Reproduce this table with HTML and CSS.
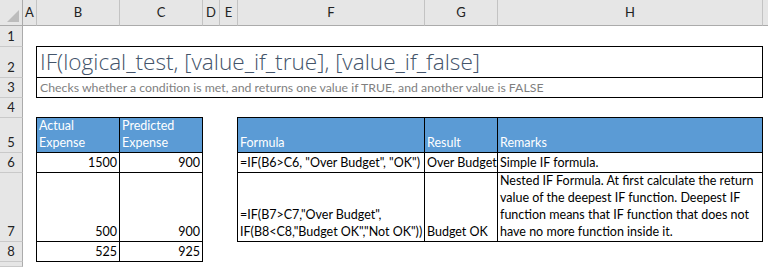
FILE: index.html
```html
<!DOCTYPE html>
<html lang="en">
<head>
<meta charset="utf-8">
<title>IF function</title>
<link rel="stylesheet" href="styles.css">
</head>
<body>
<div class="sheet">
  <!-- column headers -->
  <div class="row">
    <div class="corner"><div class="tri"></div></div>
    <div class="ch">A</div>
    <div class="ch">B</div>
    <div class="ch">C</div>
    <div class="ch">D</div>
    <div class="ch">E</div>
    <div class="ch">F</div>
    <div class="ch">G</div>
    <div class="ch">H</div>
    <div class="ch ch-rest"></div>
  </div>
  <!-- row 1 -->
  <div class="row">
    <div class="rh">1</div>
    <div class="fill"></div>
  </div>
  <!-- row 2 -->
  <div class="row">
    <div class="rh">2</div>
    <div></div>
    <div class="box title">IF(logical_test, [value_if_true], [value_if_false]</div>
    <div></div>
  </div>
  <!-- row 3 -->
  <div class="row">
    <div class="rh">3</div>
    <div></div>
    <div class="box subtitle">Checks whether a condition is met, and returns one value if TRUE, and another value is FALSE</div>
    <div></div>
  </div>
  <!-- row 4 -->
  <div class="row">
    <div class="rh">4</div>
    <div class="fill"></div>
  </div>
  <!-- row 5 -->
  <div class="row">
    <div class="rh">5</div>
    <div></div>
    <div class="c t head">Actual<br>Expense</div>
    <div class="c t head">Predicted<br>Expense</div>
    <div></div>
    <div></div>
    <div class="c t head">Formula</div>
    <div class="c t head">Result</div>
    <div class="c t head">Remarks</div>
    <div></div>
  </div>
  <!-- row 6 -->
  <div class="row">
    <div class="rh">6</div>
    <div></div>
    <div class="c t num">1500</div>
    <div class="c t num">900</div>
    <div></div>
    <div></div>
    <div class="c t">=IF(B6&gt;C6, "Over Budget", "OK")</div>
    <div class="c t">Over Budget</div>
    <div class="c t">Simple IF formula.</div>
    <div></div>
  </div>
  <!-- row 7 -->
  <div class="row">
    <div class="rh">7</div>
    <div></div>
    <div class="c t num">500</div>
    <div class="c t num">900</div>
    <div></div>
    <div></div>
    <div class="c t">=IF(B7&gt;C7,"Over Budget",<br>IF(B8&lt;C8,"Budget OK","Not OK"))</div>
    <div class="c t">Budget OK</div>
    <div class="c t">Nested IF Formula. At first calculate the return<br>value of the deepest IF function. Deepest IF<br>function means that IF function that does not<br>have no more function inside it.</div>
    <div></div>
  </div>
  <!-- row 8 -->
  <div class="row">
    <div class="rh">8</div>
    <div></div>
    <div class="c t num">525</div>
    <div class="c t num">925</div>
    <div class="fill-right"></div>
  </div>
  <!-- row 9 -->
  <div class="row">
    <div class="rh"></div>
    <div class="fill"></div>
  </div>
</div>
</body>
</html>
```
FILE: styles.css
```css
* { box-sizing: border-box; }

html, body {
  margin: 0;
  padding: 0;
  background: #ffffff;
}

body {
  width: 768px;
  height: 267px;
  overflow: hidden;
  font-family: "Lato", "Liberation Sans", sans-serif;
  font-size: 12.5px;
  color: #000;
}

.sheet {
  display: grid;
  grid-template-columns: 23px 14px 83px 83px 17px 18px 187px 73px 265px 1fr;
  grid-template-rows: 26px 21px 31px 20px 20px 35px 20px 69px 20px 1fr;
  width: 768px;
  height: 267px;
}

.row { display: contents; }

/* headers */
.corner {
  background: #e6e6e6;
  border-right: 1px solid #ababab;
  border-bottom: 1px solid #ababab;
  display: flex;
  justify-content: flex-end;
  align-items: flex-end;
  padding: 0 3px 3px 0;
}
.tri {
  width: 12px;
  height: 12px;
  background: #bcbcbc;
  clip-path: polygon(100% 0, 100% 100%, 0 100%);
}

.ch {
  background: #e6e6e6;
  border-right: 1px solid #c3c3c3;
  border-bottom: 1px solid #ababab;
  display: flex;
  justify-content: center;
  align-items: flex-end;
  padding-bottom: 4px;
  line-height: 17px;
  font-size: 13px;
  color: #222;
}
.ch-rest { border-right: none; }

.rh {
  grid-column: 1;
  background: #e6e6e6;
  border-right: 1px solid #ababab;
  border-bottom: 1px solid #c9c9c9;
  display: flex;
  justify-content: center;
  align-items: flex-end;
  padding-bottom: 1px;
  line-height: 17px;
  font-size: 13px;
  color: #222;
}

.fill { grid-column: 2 / -1; }
.fill-right { grid-column: 5 / -1; }

/* bordered boxes */
.box,
.t {
  border-right: 1px solid #000;
  border-bottom: 1px solid #000;
  box-shadow: -1px 0 0 #000, 0 -1px 0 #000, -1px -1px 0 #000;
}

.box {
  grid-column: 3 / 10;
  display: flex;
  align-items: flex-end;
  white-space: nowrap;
}

.title {
  font-family: "Open Sans", "Liberation Sans", sans-serif;
  font-weight: 300;
  font-size: 22.6px;
  line-height: 30px;
  color: #44546a;
  padding: 0 2px 0 3px;
}

.subtitle {
  color: #7f7f7f;
  font-size: 12.3px;
  line-height: 17px;
  padding: 0 2px 1px 3px;
}

/* cells */
.c {
  display: flex;
  flex-direction: column;
  justify-content: flex-end;
  align-items: flex-start;
  padding: 0 2px 1px 2px;
  line-height: 17px;
  white-space: nowrap;
}

.num { align-items: flex-end; }

.head {
  background: #5b9bd5;
  color: #ffffff;
}
```
